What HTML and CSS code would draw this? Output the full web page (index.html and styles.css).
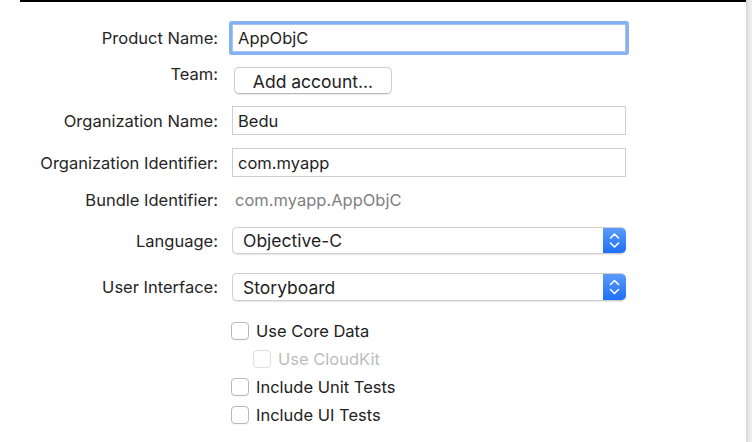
FILE: index.html
```html
<!DOCTYPE html>
<html>
<head>
<meta charset="utf-8">
<link rel="stylesheet" href="styles.css">
</head>
<body>
<div class="page">
  <div class="main">
    <div class="topline"></div>
    <div class="form">
      <div class="row r1">
        <div class="label">Product Name:</div>
        <div class="field focused">AppObjC</div>
      </div>
      <div class="row r2">
        <div class="label team">Team:</div>
        <div class="button">Add account...</div>
      </div>
      <div class="row r3">
        <div class="label">Organization Name:</div>
        <div class="field">Bedu</div>
      </div>
      <div class="row r4">
        <div class="label">Organization Identifier:</div>
        <div class="field">com.myapp</div>
      </div>
      <div class="row r5">
        <div class="label">Bundle Identifier:</div>
        <div class="static">com.myapp.AppObjC</div>
      </div>
      <div class="row r6">
        <div class="label">Language:</div>
        <div class="popup">
          <span class="popup-text">Objective-C</span>
          <span class="stepper"><svg width="23" height="27" viewBox="0 0 23 27"><path d="M7.5 11 L11.5 7 L15.5 11" fill="none" stroke="#fff" stroke-width="1.6" stroke-linecap="round" stroke-linejoin="round"/><path d="M7.5 16 L11.5 20 L15.5 16" fill="none" stroke="#fff" stroke-width="1.6" stroke-linecap="round" stroke-linejoin="round"/></svg></span>
        </div>
      </div>
      <div class="row r7">
        <div class="label">User Interface:</div>
        <div class="popup">
          <span class="popup-text">Storyboard</span>
          <span class="stepper"><svg width="23" height="28" viewBox="0 0 23 28"><path d="M7.5 11.5 L11.5 7.5 L15.5 11.5" fill="none" stroke="#fff" stroke-width="1.6" stroke-linecap="round" stroke-linejoin="round"/><path d="M7.5 16.5 L11.5 20.5 L15.5 16.5" fill="none" stroke="#fff" stroke-width="1.6" stroke-linecap="round" stroke-linejoin="round"/></svg></span>
        </div>
      </div>
      <div class="checks">
        <div class="check c1"><span class="box"></span><span>Use Core Data</span></div>
        <div class="check c2 disabled"><span class="box"></span><span>Use CloudKit</span></div>
        <div class="check c3"><span class="box"></span><span>Include Unit Tests</span></div>
        <div class="check c4"><span class="box"></span><span>Include UI Tests</span></div>
      </div>
    </div>
  </div>
  <div class="sidebar"></div>
</div>
</body>
</html>
```

FILE: styles.css
```css
* { box-sizing: border-box; }
html, body { margin: 0; padding: 0; background: #fff; }
body {
  font-family: "Inter", "Liberation Sans", sans-serif;
  font-size: 16.5px;
  color: #262626;
}
.page {
  display: flex;
  width: 752px;
  height: 442px;
  overflow: hidden;
}
.main { flex: 1; }
.sidebar {
  width: 6px;
  background: linear-gradient(to right, #d6d6d6, #e6e6e6 40%, #f0f0f0);
}
.topline {
  margin-left: 20px;
  height: 2px;
  background: #000;
}
.form { display: flex; flex-direction: column; }
.row {
  display: flex;
  align-items: center;
}
.label {
  width: 218px;
  text-align: right;
  flex: none;
  white-space: nowrap;
}
.r1 { margin-top: 22px; height: 28px; }
.r2 { margin-top: 15px; height: 27px; }
.r3 { margin-top: 12px; height: 29px; }
.r4 { margin-top: 13px; height: 29px; }
.r5 { margin-top: 13px; height: 20px; }
.r6 { margin-top: 17px; height: 27px; }
.r7 { margin-top: 19px; height: 28px; }
.field {
  margin-left: 14px;
  width: 394px;
  height: 100%;
  border: 1px solid #cfcfcf;
  background: #fff;
  padding-left: 5px;
  display: flex;
  align-items: center;
  color: #1f1f1f;
}
.field.focused {
  border-color: #a9c3ec;
  box-shadow: 0 0 0 3px #86b1f5;
  border-radius: 1px;
}
.team { align-self: flex-start; margin-top: -3px; }
.button {
  margin-left: 16px;
  width: 158px;
  height: 27px;
  border: 1px solid #cdcdcd;
  border-bottom-color: #b9b9b9;
  border-radius: 5px;
  background: #fff;
  box-shadow: 0 0.5px 1px rgba(0,0,0,0.08);
  display: flex;
  align-items: center;
  justify-content: center;
  font-size: 17.5px;
  color: #222;
  padding-top: 1px;
}
.static {
  margin-left: 17px;
  color: #7f7f7f;
}
.popup {
  margin-left: 14px;
  width: 394px;
  height: 100%;
  border: 1px solid #d0d0d0;
  border-right: none;
  border-radius: 5px;
  background: #fff;
  display: flex;
  align-items: center;
  justify-content: space-between;
  box-shadow: 0 0.5px 1px rgba(0,0,0,0.1);
  overflow: hidden;
  font-size: 17.5px;
  color: #1f1f1f;
}
.popup-text { padding-left: 10px; }
.stepper {
  width: 23px;
  height: calc(100% + 2px);
  margin: -1px 0;
  background: linear-gradient(to bottom, #5d9df9, #1b6ef6);
  border-radius: 0 5px 5px 0;
  display: flex;
}
.checks {
  display: flex;
  flex-direction: column;
  padding-left: 231px;
}
.check {
  display: flex;
  align-items: center;
  height: 17px;
  gap: 7px;
  color: #222;
}
.c1 { margin-top: 21px; }
.c2 { margin-top: 11px; margin-left: 22px; }
.c3 { margin-top: 11px; }
.c4 { margin-top: 11px; }
.box {
  width: 18px;
  height: 18px;
  border: 1px solid #b8b8b8;
  border-radius: 4px;
  background: #fff;
  flex: none;
  box-shadow: 0 0.5px 0.5px rgba(0,0,0,0.06);
}
.disabled { color: #bdbdbd; }
.disabled .box { border-color: #dedede; box-shadow: none; }
```
